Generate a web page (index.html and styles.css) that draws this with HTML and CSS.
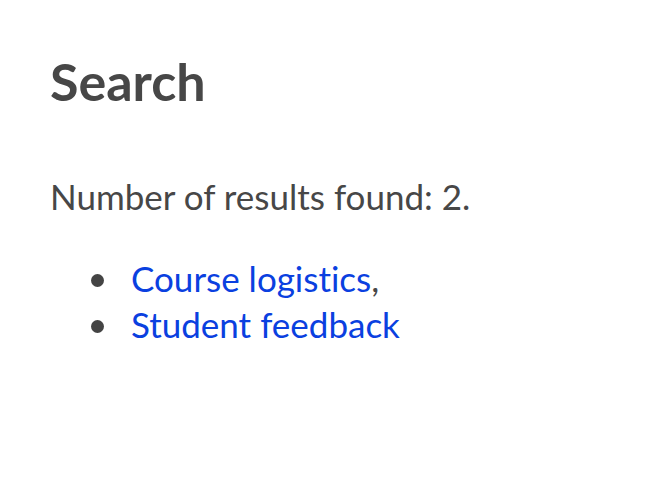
FILE: index.html
```html
<!DOCTYPE html>
<html lang="en">
<head>
<meta charset="utf-8">
<title>Search</title>
<link rel="stylesheet" href="styles.css">
</head>
<body>
<main class="page">
  <h1 class="title">Search</h1>
  <p class="summary">Number of results found: 2.</p>
  <ul class="results">
    <li class="result"><a href="#" class="result-link">Course logistics</a>,</li>
    <li class="result"><a href="#" class="result-link">Student feedback</a></li>
  </ul>
</main>
</body>
</html>
```
FILE: styles.css
```css
html, body {
  margin: 0;
  padding: 0;
  background: #ffffff;
}
.page {
  padding: 46px 50px 0 50px;
  font-family: "Lato", "Liberation Sans", sans-serif;
  font-variant-ligatures: none;
  color: #474747;
  font-size: 35px;
  line-height: 46px;
}
.title {
  margin: 0;
  font-size: 52px;
  line-height: 70px;
  font-weight: 700;
}
.summary {
  margin: 57px 0 0 0;
}
.results {
  margin: 36px 0 0 0;
  padding-left: 41px;
  list-style: none;
}
.result::before {
  content: "";
  display: inline-block;
  width: 13px;
  height: 13px;
  border-radius: 50%;
  background: #444444;
  margin-right: 27px;
  vertical-align: 5.5px;
}
.result-link {
  color: #0a40e0;
  text-decoration: none;
}
```
